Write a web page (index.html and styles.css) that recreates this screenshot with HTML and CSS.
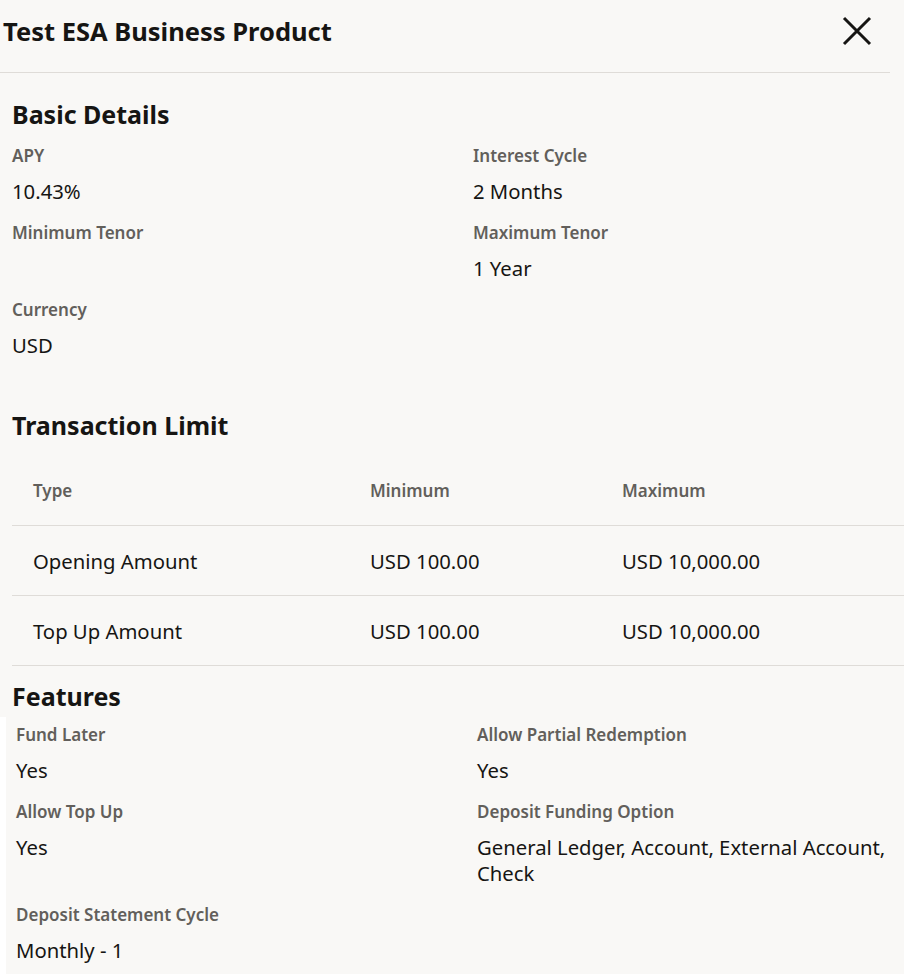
FILE: index.html
```html
<!DOCTYPE html>
<html lang="en">
<head>
    <meta charset="UTF-8">
    <meta name="viewport" content="width=device-width, initial-scale=1.0">
    <title>Test ESA Business Product</title>
    <link rel="stylesheet" href="styles.css">
</head>
<body>

<header class="panel-header">
    <h1 class="panel-title">Test ESA Business Product</h1>
    <a class="close-btn" aria-label="Close">
        <svg width="30" height="30" viewBox="0 0 30 30">
            <path d="M2 2 L28 28 M28 2 L2 28" stroke="#161513" stroke-width="3" fill="none"/>
        </svg>
    </a>
</header>

<section class="section basic">
    <h2 class="section-title">Basic Details</h2>
    <div class="details">
        <div class="field">
            <div class="field-label">APY</div>
            <div class="field-value">10.43%</div>
        </div>
        <div class="field">
            <div class="field-label">Interest Cycle</div>
            <div class="field-value">2 Months</div>
        </div>
        <div class="field">
            <div class="field-label">Minimum Tenor</div>
            <div class="field-value"></div>
        </div>
        <div class="field">
            <div class="field-label">Maximum Tenor</div>
            <div class="field-value">1 Year</div>
        </div>
        <div class="field">
            <div class="field-label">Currency</div>
            <div class="field-value">USD</div>
        </div>
    </div>
</section>

<section class="section limits">
    <h2 class="section-title">Transaction Limit</h2>
    <table class="limit-table">
        <thead>
            <tr>
                <th class="col-type">Type</th>
                <th class="col-min">Minimum</th>
                <th>Maximum</th>
            </tr>
        </thead>
        <tbody>
            <tr>
                <td>Opening Amount</td>
                <td>USD 100.00</td>
                <td>USD 10,000.00</td>
            </tr>
            <tr>
                <td>Top Up Amount</td>
                <td>USD 100.00</td>
                <td>USD 10,000.00</td>
            </tr>
        </tbody>
    </table>
</section>

<section class="section features">
    <h2 class="section-title">Features</h2>
    <div class="feature-box">
        <div class="details">
            <div class="field">
                <div class="field-label">Fund Later</div>
                <div class="field-value">Yes</div>
            </div>
            <div class="field">
                <div class="field-label">Allow Partial Redemption</div>
                <div class="field-value">Yes</div>
            </div>
            <div class="field">
                <div class="field-label">Allow Top Up</div>
                <div class="field-value">Yes</div>
            </div>
            <div class="field">
                <div class="field-label">Deposit Funding Option</div>
                <div class="field-value">General Ledger, Account, External Account, Check</div>
            </div>
            <div class="field">
                <div class="field-label">Deposit Statement Cycle</div>
                <div class="field-value">Monthly - 1</div>
            </div>
        </div>
    </div>
</section>

</body>
</html>
```

FILE: styles.css
```css
body {
    font-family: "Noto Sans", "Open Sans", sans-serif;
    color: #161513;
    background-color: #f9f8f6;
    margin: 0;
    padding: 0;
}

.panel-header {
    display: flex;
    align-items: center;
    justify-content: space-between;
    height: 73px;
    margin-right: 14px;
    padding-left: 3px;
    border-bottom: 1px solid #dfdcd8;
    box-sizing: border-box;
}

.panel-title {
    margin: 0;
    margin-top: -10px;
    font-size: 25.5px;
    font-weight: 700;
}

.close-btn {
    display: flex;
    margin-right: 18px;
    margin-top: -10px;
    cursor: pointer;
}

.section {
    padding-left: 12px;
}

.section-title {
    margin: 0;
    font-size: 25px;
    font-weight: 700;
    line-height: 32px;
}

.details {
    display: grid;
    grid-template-columns: 461px 1fr;
    padding-right: 14px;
}

.field {
    display: flex;
    flex-direction: column;
    padding-bottom: 17px;
}

.field-label {
    font-size: 17px;
    font-weight: 600;
    color: #625f5b;
    line-height: 24px;
}

.field-value {
    font-size: 20.3px;
    line-height: 26px;
    min-height: 26px;
    padding-top: 10px;
}

.basic {
    padding-top: 25px;
}

.basic .details {
    padding-top: 14px;
}

.limits {
    padding-top: 34px;
}

.limit-table {
    width: 100%;
    border-collapse: collapse;
    margin-top: 15px;
}

.limit-table th,
.limit-table td {
    text-align: left;
    height: 69px;
    padding: 0 0 0 21px;
    border-bottom: 1px solid #dfdcd8;
}

.limit-table th {
    font-size: 17px;
    font-weight: 600;
    color: #625f5b;
}

.limit-table td {
    font-size: 20.3px;
}

.col-type {
    width: 316px;
}

.col-min {
    width: 231px;
}

.features {
    padding-left: 0;
    padding-top: 14px;
}

.features .section-title {
    padding-left: 12px;
}

/* white gutter down the left edge of the features list */
.feature-box {
    border-left: 6px solid #ffffff;
    margin-top: 5px;
    padding-left: 10px;
    padding-top: 6px;
}
```
